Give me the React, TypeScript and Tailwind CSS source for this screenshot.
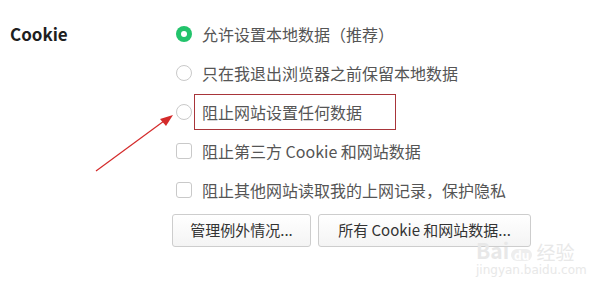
const font = { fontFamily: '"Noto Sans CJK SC", "Noto Sans", sans-serif' }

function Radio({ checked }: { checked?: boolean }) {
  if (checked) {
    return (
      <span className="flex h-4 w-4 shrink-0 items-center justify-center rounded-full bg-[#22c36b]">
        <span className="h-[6px] w-[6px] rounded-full bg-white" />
      </span>
    )
  }
  return <span className="h-4 w-4 shrink-0 rounded-full border-[1.5px] border-[#c9c9c9] bg-white" />
}

function Checkbox() {
  return <span className="h-4 w-4 shrink-0 rounded-[3px] border-[1.5px] border-[#c9c9c9] bg-white" />
}

const rowClass = 'flex h-[26px] items-center gap-[10px] text-[16px] text-[#555]'

export default function App() {
  return (
    <div
      className="relative h-[286px] w-[610px] overflow-hidden bg-white antialiased"
      style={font}
    >
      <div className="flex pt-[21px]">
        <div className="w-[176px] shrink-0 pl-[10px]">
          <div className="flex h-[26px] items-center text-[17px] font-bold text-[#1f1f1f]">
            Cookie
          </div>
        </div>

        <div className="flex flex-col">
          <div className="flex flex-col gap-[13px]">
            <div className={rowClass}>
              <Radio checked />
              <span>允许设置本地数据（推荐）</span>
            </div>
            <div className={rowClass}>
              <Radio />
              <span>只在我退出浏览器之前保留本地数据</span>
            </div>
            <div className={rowClass}>
              <Radio />
              <span className="relative">
                阻止网站设置任何数据
                <span className="absolute left-[-8px] top-[-6px] h-[36px] w-[202px] border-[1.5px] border-[#a8353a]" />
              </span>
            </div>
            <div className={rowClass}>
              <Checkbox />
              <span>阻止第三方 Cookie 和网站数据</span>
            </div>
            <div className={rowClass}>
              <Checkbox />
              <span>阻止其他网站读取我的上网记录，保护隐私</span>
            </div>
          </div>

          <div className="mt-[11px] flex gap-[7px] ml-[-4px]">
            <button className="flex h-[33px] w-[139px] items-center justify-center rounded-[3px] border border-[#cdcdcd] bg-gradient-to-b from-white to-[#f4f4f4] text-[15px] text-[#333]">
              管理例外情况...
            </button>
            <button className="flex h-[33px] w-[213px] items-center justify-center rounded-[3px] border border-[#cdcdcd] bg-gradient-to-b from-white to-[#f4f4f4] text-[15px] text-[#333]">
              所有 Cookie 和网站数据...
            </button>
          </div>
        </div>
      </div>

      {/* annotation arrow */}
      <svg className="absolute left-0 top-0" width="610" height="286">
        <line x1="96" y1="171" x2="164" y2="121" stroke="#d42a2a" strokeWidth="1.2" />
        <polygon points="173,115 160,119 166,126" fill="#d42a2a" />
      </svg>

      {/* watermark */}
      <div className="absolute left-[476px] top-[240px] flex flex-col leading-none text-[#e8e8e8]">
        <div className="flex items-end gap-[2px] text-[21px] font-bold">
          <span>Bai</span>
          <span className="rounded-full bg-[#eeeeee] px-[3px] text-[12px] text-white">du</span>
          <span className="ml-[2px] text-[19px] font-normal">经验</span>
        </div>
        <div className="mt-[3px] text-[12px]" style={{ fontFamily: '"DejaVu Sans", sans-serif' }}>
          jingyan.baidu.com
        </div>
      </div>
    </div>
  )
}
